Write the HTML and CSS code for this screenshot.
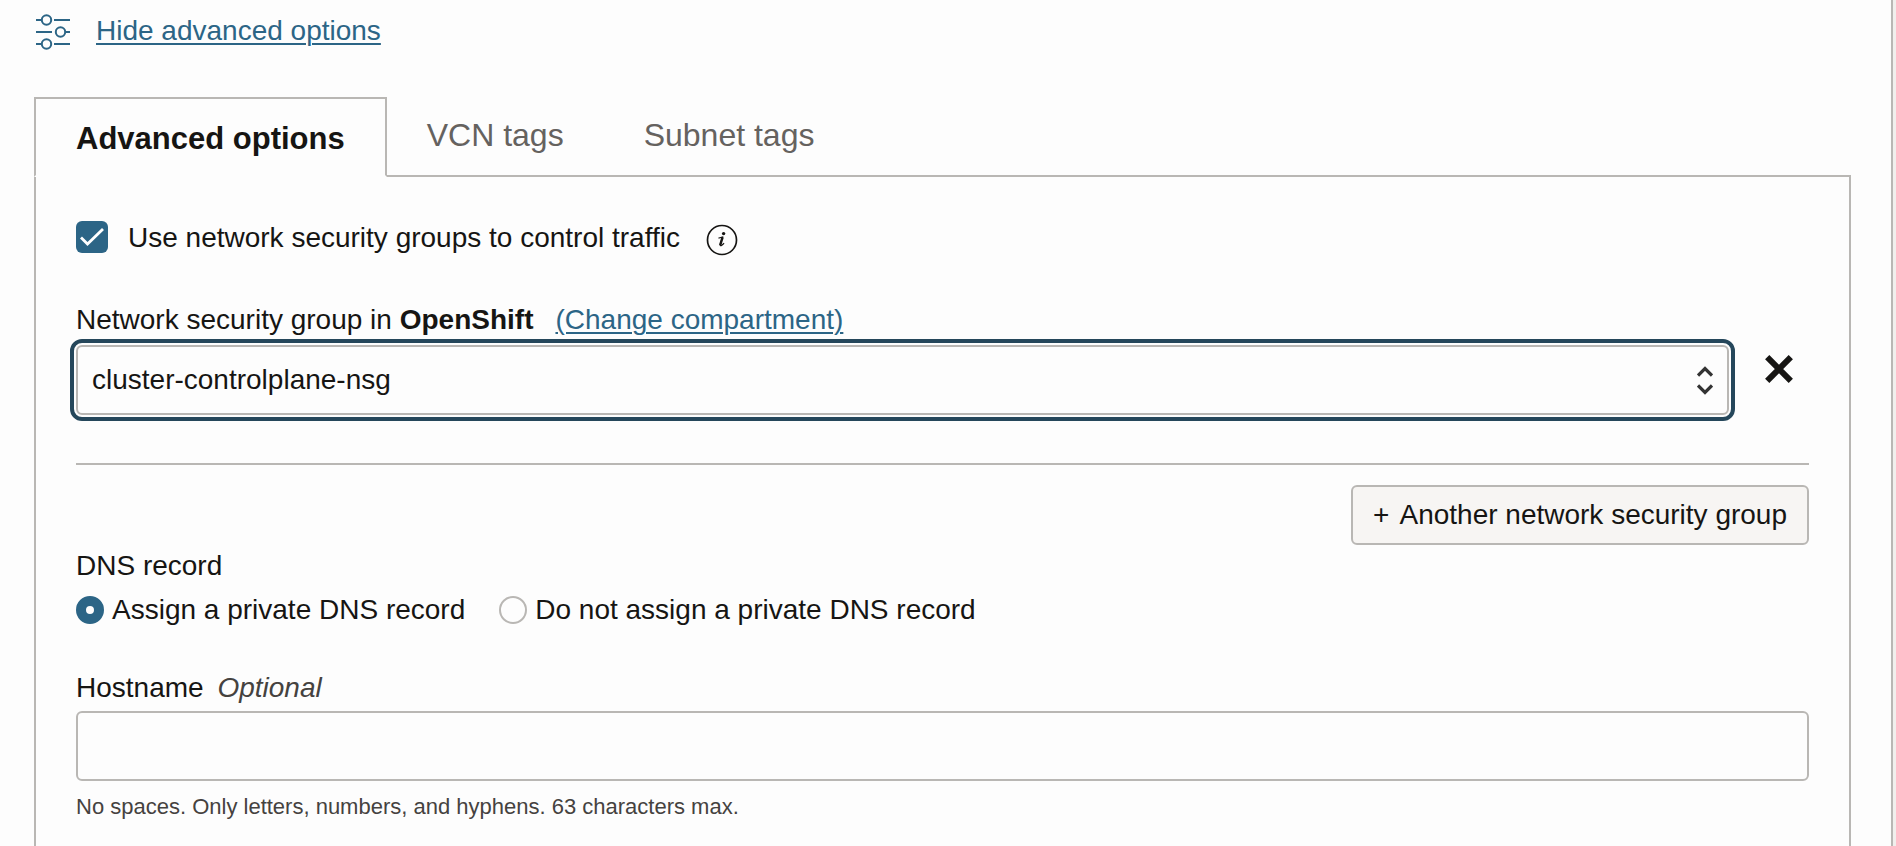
FILE: index.html
```html
<!DOCTYPE html>
<html lang="en">
<head>
<meta charset="utf-8">
<title>Advanced options</title>
<link rel="stylesheet" href="styles.css">
</head>
<body>
<main class="page">
  <div class="toggle">
    <svg class="toggle-icon" width="34" height="36" viewBox="0 0 34 36" fill="none" stroke="currentColor" stroke-width="2" aria-hidden="true">
      <path d="M0 6h5M18 6h16M0 18h16M29 18h5M0 30h5M18 30h16"/>
      <circle cx="10.500" cy="6" r="4.700"/>
      <circle cx="24.500" cy="18" r="4.700"/>
      <circle cx="10.500" cy="30" r="4.700"/>
    </svg>
    <a class="link" href="#options">Hide advanced options</a>
  </div>

  <div class="tabs" role="tablist">
    <button class="tab tab-active" type="button" role="tab" aria-selected="true">Advanced options</button>
    <button class="tab" type="button" role="tab" aria-selected="false">VCN tags</button>
    <button class="tab" type="button" role="tab" aria-selected="false">Subnet tags</button>
  </div>

  <form class="panel" id="options">
    <div class="check-row">
      <input class="checkbox" type="checkbox" id="use-nsg" checked>
      <label for="use-nsg">Use network security groups to control traffic</label>
      <button class="info" type="button" aria-label="More information">
        <svg width="32" height="32" viewBox="0 0 32 32" aria-hidden="true">
          <circle cx="16" cy="16" r="14.500" fill="none" stroke="currentColor" stroke-width="1.700"/>
          <circle cx="17.600" cy="9.600" r="1.700" fill="currentColor"/>
          <path d="M12.500 14.200c1.500-.3 2.800-.8 4-1.200l-2.300 7.600c-.3 1.400.6 1.400 1.600.600l2.300-2" fill="none" stroke="currentColor" stroke-width="1.200"/>
          <path d="M16.600 13.200l-2.400 8" fill="none" stroke="currentColor" stroke-width="2.400"/>
        </svg>
      </button>
    </div>

    <div class="field-label nsg-label">
      <label for="nsg">Network security group in <strong>OpenShift</strong></label>
      <a class="link" href="#compartment">(Change compartment)</a>
    </div>
    <div class="nsg-row">
      <div class="select-wrap">
        <select class="control select" id="nsg">
          <option>cluster-controlplane-nsg</option>
        </select>
        <svg class="select-arrows" width="16" height="30" viewBox="0 0 16 30" fill="none" stroke="#333" stroke-width="3.200" aria-hidden="true">
          <path d="M1 10.500l7-7 7 7M1 20.500l7 7 7-7"/>
        </svg>
      </div>
      <button class="remove" type="button" aria-label="Remove network security group">
        <svg width="28" height="28" viewBox="0 0 28 28" stroke="currentColor" stroke-width="6" aria-hidden="true">
          <path d="M2.200 2.200l23.600 23.600M25.800 2.200L2.200 25.800"/>
        </svg>
      </button>
    </div>

    <hr class="divider">
    <button class="add" type="button"><span class="plus">+</span>Another network security group</button>

    <fieldset class="dns">
      <legend class="field-label">DNS record</legend>
      <div class="radios">
        <label class="radio-label"><input class="radio" type="radio" name="dns" checked>Assign a private DNS record</label>
        <label class="radio-label"><input class="radio" type="radio" name="dns">Do not assign a private DNS record</label>
      </div>
    </fieldset>

    <label class="field-label host-label" for="hostname">Hostname <em class="optional">Optional</em></label>
    <input class="control" type="text" id="hostname" aria-describedby="hostname-hint">
    <p class="hint" id="hostname-hint">No spaces. Only letters, numbers, and hyphens. 63 characters max.</p>
  </form>
</main>
</body>
</html>
```
FILE: styles.css
```css
* {
  box-sizing: border-box;
}

body {
  margin: 0;
  background: #f1efed;
  color: #161513;
  font: 28px/34px "Liberation Sans", Arial, sans-serif;
}

button,
input,
select {
  font: inherit;
  color: inherit;
}

button {
  padding: 0;
  border: 0;
  background: none;
}

.page {
  display: flex;
  flex-direction: column;
  min-height: 100vh;
  margin-right: 3px;
  padding: 14px 40px 0 34px;
  border-right: 2px solid #b9b7b4;
  background: #fdfdfd;
}

.link {
  color: #2c6586;
  text-decoration: underline;
  text-decoration-thickness: 2px;
  text-underline-offset: 3px;
}

.toggle {
  display: flex;
  gap: 26px;
  margin-bottom: 47px;
  padding-left: 2px;
}

.toggle-icon {
  color: #2c6586;
}

.tabs {
  display: flex;
  margin-bottom: -2px;
}

.tab {
  padding: 20px 40px 24px;
  color: #65625f;
  font-size: 32px;
  line-height: 36px;
}

.tab-active {
  position: relative;
  padding: 22px 40px 18px;
  border: 2px solid #b9b7b4;
  border-bottom-color: #fdfdfd;
  background: #fdfdfd;
  color: #161513;
  font-size: 31px;
  font-weight: bold;
}

.panel {
  flex: 1;
  padding: 44px 40px 20px;
  border: 2px solid #b9b7b4;
  border-bottom: 0;
}

.check-row {
  display: flex;
  margin-bottom: 48px;
}

.checkbox {
  appearance: none;
  width: 32px;
  height: 32px;
  margin: 0 20px 0 0;
  border-radius: 6px;
  background: #2c6586;
}

.checkbox:checked {
  background: #2c6586 url("data:image/svg+xml,%3Csvg xmlns='http://www.w3.org/2000/svg' viewBox='0 0 32 32'%3E%3Cpath d='M5 16.500l6.500 6.500L27 8' fill='none' stroke='white' stroke-width='2.800'/%3E%3C/svg%3E");
}

.info {
  height: 32px;
  margin: 3px 0 -3px 26px;
}

.info svg,
.remove svg {
  display: block;
}

.field-label {
  display: block;
  padding: 0;
}

.nsg-label {
  display: flex;
  gap: 22px;
  margin-bottom: 8px;
}

.nsg-row {
  display: flex;
  gap: 20px;
}

.select-wrap {
  position: relative;
  flex: 1;
}

.control {
  display: block;
  width: 100%;
  height: 70px;
  padding: 0 14px;
  border: 2px solid #b9b7b4;
  border-radius: 6px;
  background: #fdfdfd;
}

.select {
  appearance: none;
  outline: 4px solid #25475b;
  outline-offset: 2px;
}

.select-arrows {
  position: absolute;
  top: 20px;
  right: 16px;
  pointer-events: none;
}

.remove {
  width: 60px;
  height: 48px;
  padding: 0 16px;
}

.divider {
  height: 2px;
  margin: 48px 0 20px;
  border: 0;
  background: #b9b7b4;
}

.add {
  display: block;
  height: 60px;
  margin: 0 0 4px auto;
  padding: 0 20px;
  border: 2px solid #b9b7b4;
  border-radius: 6px;
  background: #f7f5f3;
}

.plus {
  margin-right: 10px;
}

.dns {
  margin: 0 0 44px;
  padding: 0;
  border: 0;
}

.radios {
  display: flex;
  gap: 34px;
  margin-top: 10px;
}

.radio-label {
  display: flex;
  align-items: center;
  gap: 8px;
}

.radio {
  appearance: none;
  width: 28px;
  height: 28px;
  margin: 0;
  border: 2px solid #b9b7b4;
  border-radius: 50%;
}

.radio:checked {
  border: 10px solid #2c6586;
}

.host-label {
  margin-bottom: 6px;
}

.optional {
  margin-left: 6px;
  color: #45423f;
}

.hint {
  margin: 12px 0 0;
  color: #45423f;
  font-size: 22px;
  line-height: 28px;
}
```
